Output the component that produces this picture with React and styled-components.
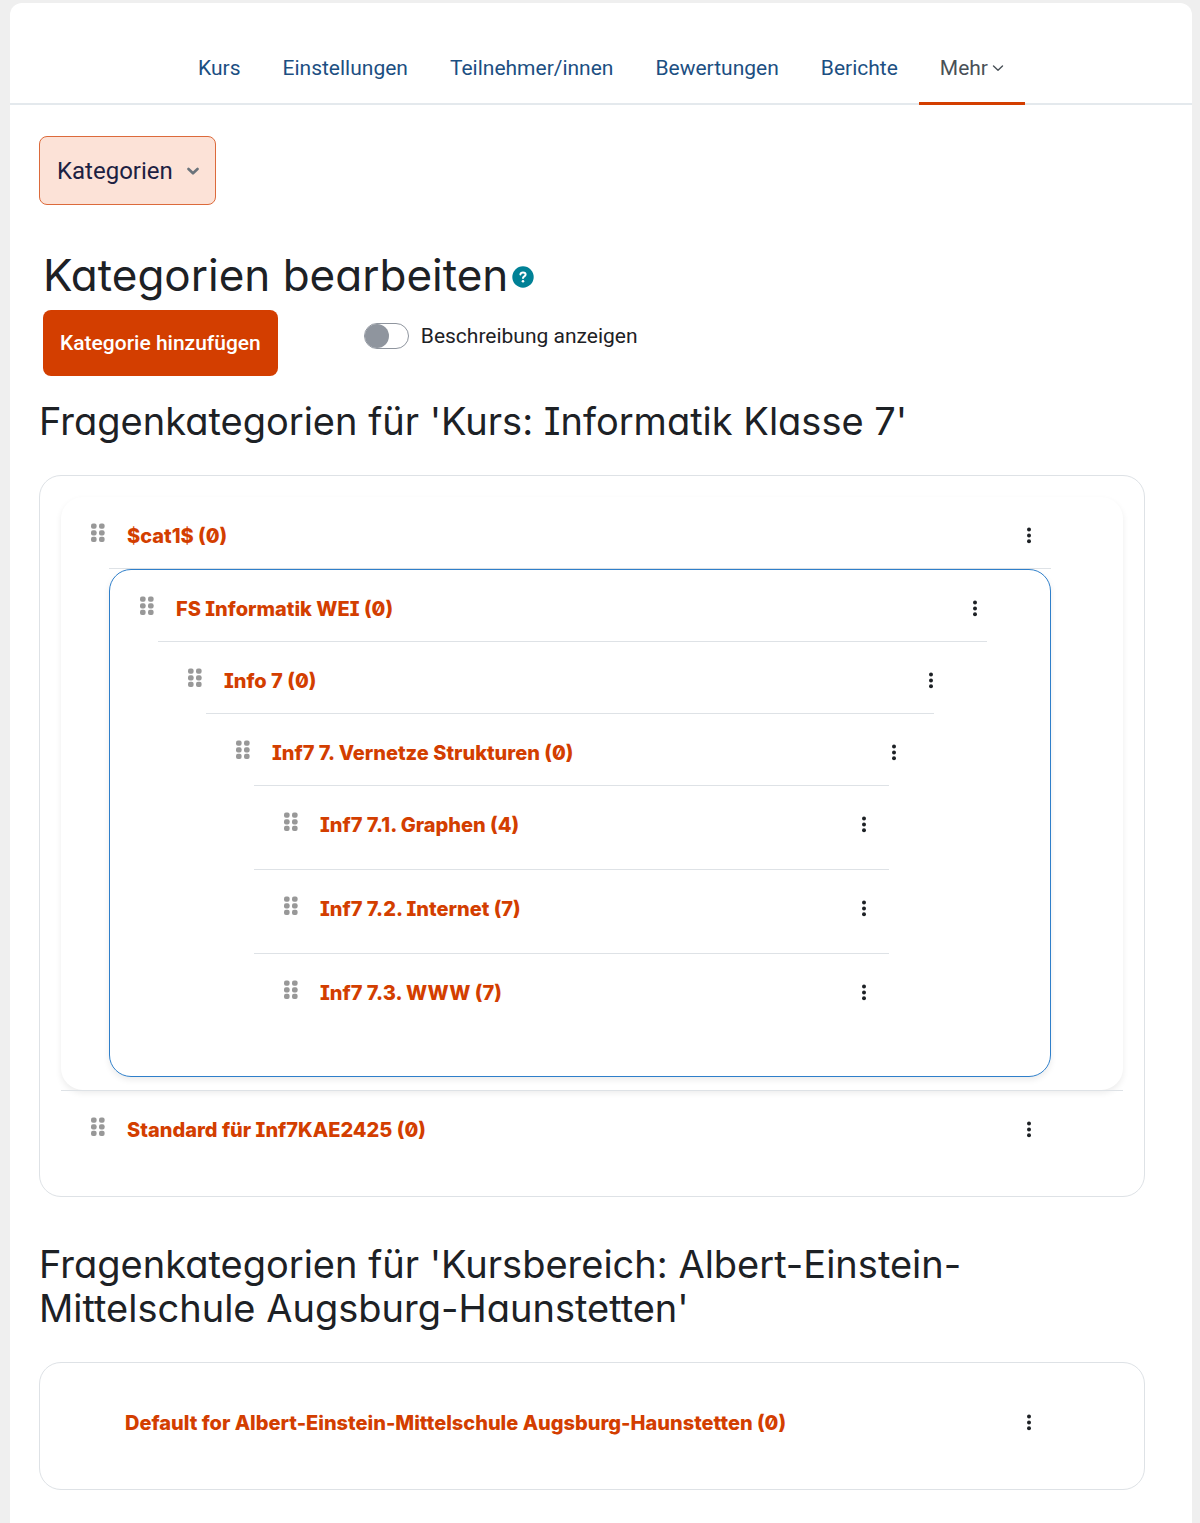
import React, { useState } from 'react'
import styled, { createGlobalStyle } from 'styled-components'

const orange = '#d33e00'
const dark = '#1d2125'
const line = '#dee2e6'
const blue = '#2f7fca'
const navy = '#1c4f82'

const GlobalStyle = createGlobalStyle`
  * {
    box-sizing: border-box;
  }
  body {
    margin: 0;
    background: #efefef;
    color: ${dark};
    font-family: Roboto, 'Liberation Sans', sans-serif;
  }
`

const Page = styled.div`
  margin: 3px 8px 0 10px;
  background: #fff;
  border-radius: 12px 12px 0 0;
`

const Nav = styled.nav`
  display: flex;
  justify-content: center;
  padding-top: 30px;
  border-bottom: 2px solid #e4e9ed;
`

const NavLink = styled.a`
  display: flex;
  align-items: center;
  gap: 4px;
  height: 72px;
  padding: 0 21px;
  margin-bottom: -2px;
  border-bottom: 3px solid ${({ $active }) => ($active ? orange : 'transparent')};
  color: ${({ $active }) => ($active ? '#495057' : navy)};
  font-size: 21px;
  text-decoration: none;
`

const Content = styled.main`
  padding: 31px 47px 1px 29px;
`

const SelectBox = styled.div`
  position: relative;
  width: fit-content;
  svg {
    position: absolute;
    right: 17px;
    top: 29px;
    pointer-events: none;
  }
`

const Select = styled.select`
  appearance: none;
  height: 69px;
  padding: 0 42px 0 17px;
  border: 1px solid #dc6a3b;
  border-radius: 8px;
  background: #fce2d7;
  color: #1d2142;
  font-family: inherit;
  font-size: 24px;
`

const Head = styled.header`
  margin: 45px 0 0 4px;
`

const Title = styled.h2`
  display: flex;
  align-items: center;
  gap: 4px;
  margin: 0;
  font-family: Inter, 'Open Sans', sans-serif;
  font-feature-settings: 'cv11', 'cv08';
  font-size: 44px;
  font-weight: 400;
  line-height: 50px;
`

const HelpButton = styled.button`
  display: flex;
  margin-top: 4px;
  padding: 0;
  border: 0;
  background: none;
`

const Toolbar = styled.div`
  display: flex;
  gap: 86px;
  margin: 10px 0 23px;
`

const AddButton = styled.button`
  height: 66px;
  padding: 0 17px;
  border: 0;
  border-radius: 8px;
  background: ${orange};
  color: #fff;
  font-family: inherit;
  font-size: 21px;
  font-weight: 500;
`

const SwitchLabel = styled.label`
  display: flex;
  align-items: center;
  gap: 12px;
  height: 52px;
  font-size: 21px;
`

const Switch = styled.input`
  appearance: none;
  display: flex;
  align-items: center;
  width: 45px;
  height: 26px;
  margin: 0;
  border: 1px solid #8f959e;
  border-radius: 13px;
  &::before {
    content: '';
    width: 24px;
    height: 24px;
    border-radius: 50%;
    background: #8f959e;
  }
  &:checked {
    justify-content: flex-end;
  }
`

const SectionTitle = styled.h3`
  margin: 0 0 32px;
  font-family: Inter, 'Open Sans', sans-serif;
  font-feature-settings: 'cv11', 'cv08';
  font-size: 38px;
  font-weight: 400;
  line-height: 44px;
`

const Panel = styled.section`
  margin-bottom: 45px;
  padding: 21px 21px 22px;
  border: 1px solid ${line};
  border-radius: 22px;
`

const List = styled.ul`
  margin: 0;
  padding: 0;
  list-style: none;
`

const SubList = styled(List)`
  width: calc(91.667% - 32px);
  margin: 0 0 1px 48px;
  border-top: 1px solid ${line};
`

const Item = styled.li`
  padding-bottom: 12px;
  border: ${({ $look }) => ($look === 'active' ? `1px solid ${blue}` : '0')};
  border-radius: ${({ $look }) => ($look ? '22px' : '0')};
  box-shadow: ${({ $look }) => ($look ? '0 3px 6px rgba(0, 0, 0, 0.08)' : 'none')};
  & + & {
    border-top: 1px solid ${line};
  }
`

const Row = styled.div`
  display: flex;
  align-items: center;
  width: calc(84% + 84px);
  height: 71px;
  padding: 6px 0 0 29px;
`

const Handle = styled.svg`
  flex: none;
  margin: 0 22px 6px 0;
`

const CategoryLink = styled.a`
  padding-left: ${({ $plain }) => ($plain ? '35px' : '0')};
  margin-right: auto;
  color: ${orange};
  font-family: Inter, 'Open Sans', sans-serif;
  font-feature-settings: 'zero', 'cv08';
  font-size: 20px;
  font-weight: 800;
  text-decoration: none;
`

const MenuButton = styled.button`
  display: flex;
  justify-content: center;
  width: 16px;
  padding: 0;
  border: 0;
  background: none;
`

const Chevron = ({ size, color, width }) => (
  <svg width={size} height={size} viewBox="0 0 12 12" fill="none" aria-hidden="true">
    <path
      d="M1.5 4 6 8.3 10.5 4"
      stroke={color}
      strokeWidth={width}
      strokeLinecap="round"
      strokeLinejoin="round"
    />
  </svg>
)

const HelpIcon = () => (
  <svg width="22" height="22" viewBox="0 0 22 22" aria-hidden="true">
    <circle cx="11" cy="11" r="10.7" fill="#008196" />
    <path
      d="M8.4 8.4C8.6 7.2 9.6 6.6 11 6.6c1.6 0 2.6.8 2.6 2 0 1.8-2.6 1.8-2.6 3.5"
      fill="none"
      stroke="#fff"
      strokeWidth="2"
      strokeLinecap="round"
    />
    <circle cx="11" cy="15.2" r="1.3" fill="#fff" />
  </svg>
)

const DragIcon = () => (
  <Handle width="15" height="20" viewBox="0 0 15 20" fill="#989898" aria-hidden="true">
    {[0.5, 7.2, 13.8].map((y) => (
      <g key={y}>
        <rect x="1" y={y} width="5.6" height="5.2" rx="2" />
        <rect x="9" y={y} width="5.6" height="5.2" rx="2" />
      </g>
    ))}
  </Handle>
)

const DotsIcon = () => (
  <svg width="6" height="18" viewBox="0 0 6 18" fill="#1d2125" aria-hidden="true">
    <circle cx="3" cy="2.6" r="2" />
    <circle cx="3" cy="8.4" r="2" />
    <circle cx="3" cy="14.2" r="2" />
  </svg>
)

const tabs = ['Kurs', 'Einstellungen', 'Teilnehmer/innen', 'Bewertungen', 'Berichte']

const kurs = [
  {
    name: '$cat1$ (0)',
    look: 'card',
    children: [
      {
        name: 'FS Informatik WEI (0)',
        look: 'active',
        children: [
          {
            name: 'Info 7 (0)',
            children: [
              {
                name: 'Inf7 7. Vernetze Strukturen (0)',
                children: [
                  { name: 'Inf7 7.1. Graphen (4)' },
                  { name: 'Inf7 7.2. Internet (7)' },
                  { name: 'Inf7 7.3. WWW (7)' }
                ]
              }
            ]
          }
        ]
      }
    ]
  },
  { name: 'Standard für Inf7KAE2425 (0)' }
]

const kursbereich = [
  { name: 'Default for Albert-Einstein-Mittelschule Augsburg-Haunstetten (0)', plain: true }
]

const Category = ({ item }) => (
  <Item $look={item.look}>
    <Row>
      {!item.plain && <DragIcon />}
      <CategoryLink href="#" $plain={item.plain}>
        {item.name}
      </CategoryLink>
      <MenuButton type="button" aria-label="Menü">
        <DotsIcon />
      </MenuButton>
    </Row>
    {item.children && (
      <SubList>
        {item.children.map((child) => (
          <Category key={child.name} item={child} />
        ))}
      </SubList>
    )}
  </Item>
)

const CategoryPanel = ({ title, items }) => (
  <>
    <SectionTitle>{title}</SectionTitle>
    <Panel>
      <List>
        {items.map((item) => (
          <Category key={item.name} item={item} />
        ))}
      </List>
    </Panel>
  </>
)

const App = () => {
  const [description, setDescription] = useState(false)

  return (
    <>
      <GlobalStyle />
      <Page>
        <Nav>
          {tabs.map((tab) => (
            <NavLink key={tab} href="#">
              {tab}
            </NavLink>
          ))}
          <NavLink href="#" $active>
            Mehr
            <Chevron size={12} color="#495057" width={1.4} />
          </NavLink>
        </Nav>
        <Content>
          <SelectBox>
            <Select aria-label="Fragensammlung">
              <option>Kategorien</option>
            </Select>
            <Chevron size={12} color="#6a737b" width={2.6} />
          </SelectBox>
          <Head>
            <Title>
              Kategorien bearbeiten
              <HelpButton type="button" aria-label="Hilfe">
                <HelpIcon />
              </HelpButton>
            </Title>
            <Toolbar>
              <AddButton type="button">Kategorie hinzufügen</AddButton>
              <SwitchLabel>
                <Switch
                  type="checkbox"
                  checked={description}
                  onChange={(e) => setDescription(e.target.checked)}
                />
                Beschreibung anzeigen
              </SwitchLabel>
            </Toolbar>
          </Head>
          <CategoryPanel title="Fragenkategorien für 'Kurs: Informatik Klasse 7'" items={kurs} />
          <CategoryPanel
            title="Fragenkategorien für 'Kursbereich: Albert-Einstein-Mittelschule Augsburg-Haunstetten'"
            items={kursbereich}
          />
        </Content>
      </Page>
    </>
  )
}

export default App
